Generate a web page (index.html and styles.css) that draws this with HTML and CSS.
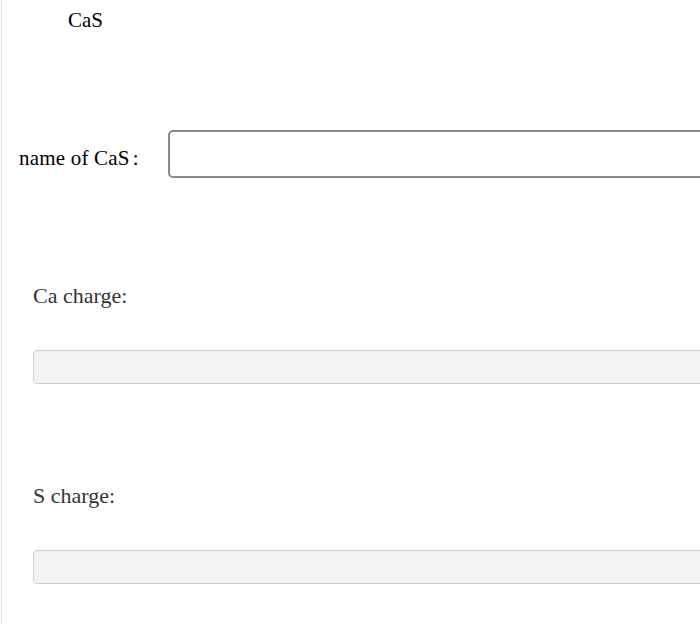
FILE: index.html
```html
<!DOCTYPE html>
<html>
<head>
<meta charset="utf-8">
<link rel="stylesheet" href="styles.css">
</head>
<body>
<div class="page">
  <div class="formula">CaS</div>
  <div class="name-row">
    <label class="name-label">name of CaS<span class="colon">:</span></label>
    <input class="name-input" type="text">
  </div>
  <div class="charge">
    <div class="charge-label">Ca charge:</div>
    <input class="charge-input" type="text" disabled>
  </div>
  <div class="charge">
    <div class="charge-label">S charge:</div>
    <input class="charge-input" type="text" disabled>
  </div>
</div>
</body>
</html>
```
FILE: styles.css
```css
html, body {
  margin: 0;
  padding: 0;
  background: #fff;
  overflow: hidden;
}
.page {
  margin-left: 1px;
  border-left: 1px solid #dcdcdc;
  min-height: 624px;
  font-family: "Liberation Serif", "Times New Roman", serif;
  font-size: 20px;
  color: #000;
  box-sizing: border-box;
}
.formula {
  padding: 9px 0 0 66px;
  line-height: 23px;
  font-size: 21px;
}
.name-row {
  display: flex;
  align-items: center;
  margin-top: 98px;
  gap: 29px;
  padding-left: 17px;
}
.name-label {
  font-size: 21px;
  line-height: 24px;
  white-space: nowrap;
  margin-top: 7px;
  letter-spacing: 0.2px;
}
.colon {
  margin-left: 3px;
}
.name-input {
  flex: 1;
  height: 48px;
  box-sizing: border-box;
  border: 2px solid #8a8a8a;
  border-radius: 5px;
  margin-right: -20px;
  background: #fff;
}
.charge {
  padding-left: 31px;
  padding-top: 105px;
}
.charge-label {
  font-size: 22px;
  line-height: 26px;
  color: #333;
}
.charge-input {
  display: block;
  margin-top: 41px;
  width: 700px;
  height: 34px;
  box-sizing: border-box;
  border: 1px solid #cfd0d4;
  border-radius: 4px;
  background: #f2f3f5;
}
.charge + .charge {
  padding-top: 99px;
}
```
